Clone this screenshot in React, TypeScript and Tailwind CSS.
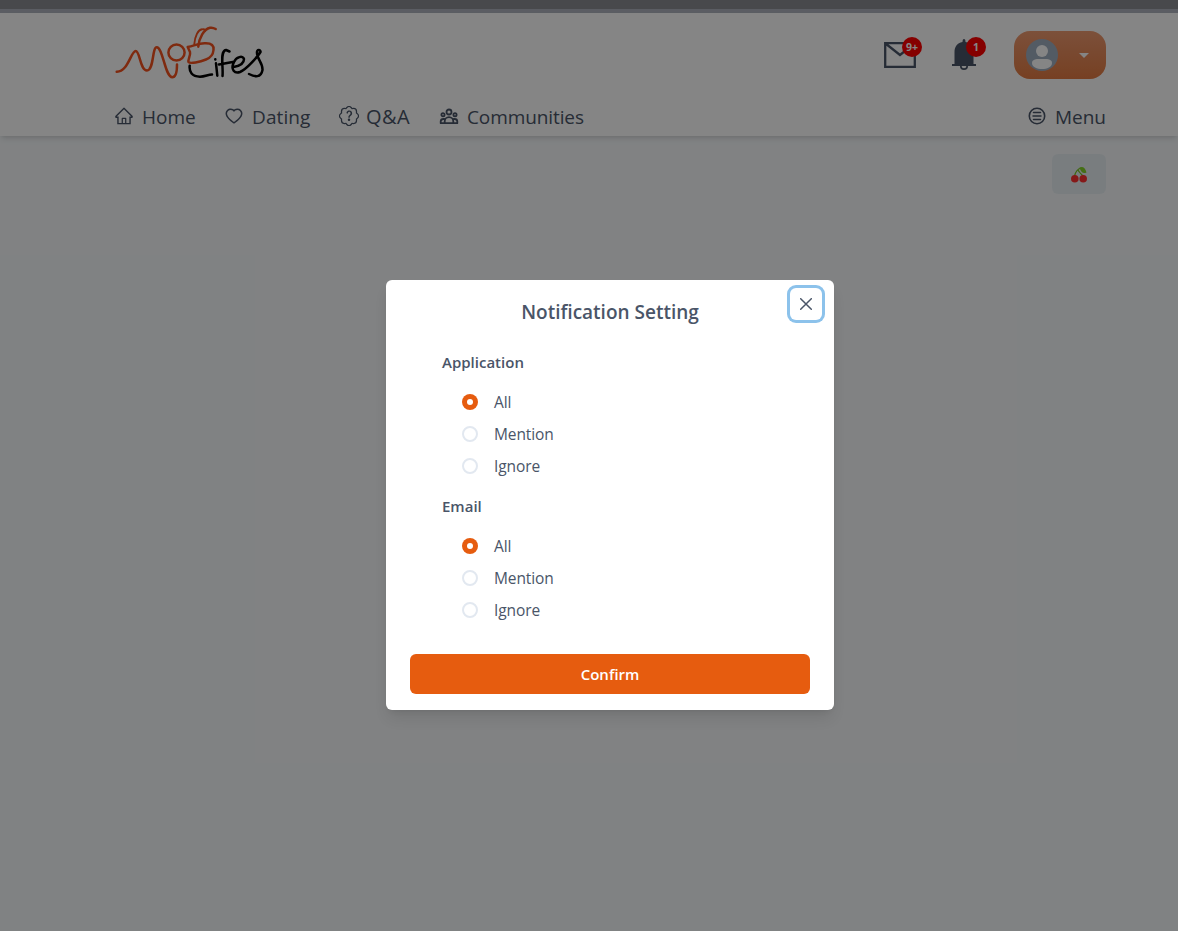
import React from "react";
import { AiOutlineHome, AiOutlineHeart } from "react-icons/ai";
import { BsPatchQuestion } from "react-icons/bs";

const Logo = () => (
  <svg className="block h-[60px] w-[156px]" viewBox="0 0 156 60" fill="none" strokeLinecap="round" strokeLinejoin="round">
    <g stroke="#f4511e" strokeWidth="2.5">
      <path d="M2.700 46.700C14 47 17 26 21.700 26C26 26 26 45.500 33 45.500C40 45.500 38 22.300 42.700 22.300C49 22.300 51 52.300 58.300 52.300C62 52.300 63 45 63 39.500" />
      <circle cx="62.500" cy="27.500" r="8.100" />
      <path d="M73.700 22C80 21 85 18 91 18.300C98 18 100 21 99.500 25C99 31 96 33 92 34.500C86 37 76 39 74.500 37C73.500 35 77 30 76 27L73.700 22Z" />
      <path d="M84.300 21.700C85 13 90 4 96 2.800C98.500 2.300 100 3 101.700 4" />
      <path d="M80.300 19C81 11 84 5 88 4.300Q91 3.500 91 6" strokeWidth="1.900" />
    </g>
    <g stroke="#000" strokeWidth="2.500">
      <path d="M75.700 40.700C75 47 78 51.700 86 51.700C91 51.700 94 49.500 98 49.500M102 38.300L103.300 50.700M101.300 34.300V34.600M108.500 51C109.500 42 105.500 26 112 25L115.500 26.500M105 39.500L120 36.700M119.500 42C126 41 130 38 130 34C129 30 122 32 120 37C116 45 121 49 126 47C133 44 144 31 146.500 27C147 24.500 142.500 24 143 28C143 34 149 38 148.500 45C147 53 141 52 135 49" />
    </g>
  </svg>
);

const MailIcon = () => (
  <svg className="block h-[26px] w-8" viewBox="0 0 32 26" fill="none" stroke="#4a5568" strokeWidth="2.300">
    <path d="M1.200 1.200H30.800V24.800H1.200ZM1.500 1.500L16 13L30.500 1.500" />
  </svg>
);

const BellIcon = () => (
  <svg className="block h-8 w-6" viewBox="0 0 24 32">
    <path d="M12 0Q13.500 0 13.500 3C19 4 21.500 8 21.500 13V25H24V27H0V25H2.500V13C2.500 8 5 4 10.500 3Q10.500 0 12 0Z" fill="#4a5568" />
    <path d="M8.800 27A3.200 3.200 0 0 0 15.200 27" fill="none" stroke="#4a5568" strokeWidth="1.700" />
  </svg>
);

const GroupIcon = () => (
  <svg className="block h-5 w-5" viewBox="0 0 20 20" fill="none" stroke="currentColor" strokeWidth="1.800" strokeLinejoin="round">
    <circle cx="10" cy="5" r="2.500" />
    <circle cx="4" cy="7.700" r="1.600" />
    <circle cx="16" cy="7.700" r="1.600" />
    <path d="M5.700 16.200V14.500A4.300 4.300 0 0 1 14.300 14.500V16.200ZM5.700 16.200H1.700V14.500Q1.700 12 4.500 12H5.800M14.300 16.200H18.300V14.500Q18.300 12 15.500 12H14.200" />
  </svg>
);

const MenuIcon = () => (
  <svg className="block size-[18px] -translate-y-px" viewBox="0 0 18 18" fill="none" stroke="currentColor" strokeWidth="1.600">
    <circle cx="9" cy="9" r="7.700" />
    <path d="M5.500 5.500H12.500M5 9H13M5.500 12.500H12.500" strokeWidth="1.500" strokeLinecap="round" />
  </svg>
);

const Cherries = () => (
  <svg className="block h-4 w-4 translate-y-px" viewBox="0 0 16 16">
    <path d="M3.500 9C4.500 5 6 2 10 1M12 9C10 7 8 5 7 3" fill="none" stroke="#77c51e" strokeWidth="1.200" />
    <path d="M8 1C11-1 14 0 15.500 5.500C12 7 10 5 9 2Z" fill="#83d42a" />
    <circle cx="3.800" cy="11.800" r="3.800" fill="#ff3030" />
    <circle cx="12.200" cy="11.800" r="3.800" fill="#ff3030" />
  </svg>
);

const Option = ({ label, checked = false }: { label: string; checked?: boolean }) => (
  <label className="flex h-8 items-center gap-4 pl-5">
    <span className={checked ? "grid size-4 place-items-center rounded-full bg-[#e65c0f]" : "size-4 rounded-full border-2 border-[#e2e8f0]"}>
      {checked && <span className="size-1.5 rounded-full bg-white" />}
    </span>
    <span className="pt-[2px] text-[15.5px] tracking-[-0.1px]">{label}</span>
  </label>
);

const Group = ({ title }: { title: string }) => (
  <section className="h-36">
    <h3 className="mb-3 h-6 text-[15px] leading-6 font-semibold">{title}</h3>
    <Option label="All" checked />
    <Option label="Mention" />
    <Option label="Ignore" />
  </section>
);

export default function App() {
  return (
    <div className="relative h-[931px] w-[1178px] overflow-hidden bg-[#f7fafc] font-['Open_Sans','Noto_Sans',sans-serif] text-[#4a5568]">
      <div className="h-[13px] border-b-4 border-[#aeb3be] bg-[#8b8d93]" />
      <header className="h-[123px] bg-white pr-[72px] pl-[114px] shadow-md">
        <div className="flex h-[84px] items-center justify-between">
          <Logo />
          <div className="flex items-center">
            <div className="relative mr-9">
              <MailIcon />
              <span className="absolute -top-[5px] left-[18px] grid size-5 place-items-center rounded-full bg-[#f00] pt-px text-[10.5px] font-bold text-white">9+</span>
            </div>
            <div className="relative mr-[38px]">
              <BellIcon />
              <span className="absolute -top-[2px] left-[14px] grid size-5 place-items-center rounded-full bg-[#f00] pt-px text-[10.5px] font-bold text-white">1</span>
            </div>
            <button className="flex h-12 w-[92px] items-center rounded-2xl bg-linear-to-b from-[#ed9a70] to-[#e37b42] pl-3">
              <svg className="size-8" viewBox="0 0 32 32">
                <circle cx="16" cy="16" r="16" fill="#a0aec0" />
                <circle cx="16" cy="12" r="6" fill="#fff" />
                <path d="M6 24C6 21 9 20 12 20H20C23 20 26 21 26 24C26 28 21 30 16 30S6 28 6 24Z" fill="#fff" />
              </svg>
              <svg className="ml-[21px] h-[5px] w-[10px]" viewBox="0 0 10 5"><path d="M0 0H10L5 5Z" fill="#fff" /></svg>
            </button>
          </div>
        </div>
        <nav className="flex h-10 items-center text-[19px]">
          <a className="flex w-[110px] items-center gap-2"><AiOutlineHome className="-translate-y-px" size={20} />Home</a>
          <a className="flex w-[115px] items-center gap-2"><AiOutlineHeart className="-translate-y-px" size={20} /><span className="tracking-[0.1px]">Dating</span></a>
          <a className="flex w-[100px] items-center gap-[7px]"><BsPatchQuestion className="-translate-y-px" size={20} /><span className="text-[20px] tracking-[0.4px]">Q&amp;A</span></a>
          <a className="flex items-center gap-2"><GroupIcon /><span className="tracking-[-0.1px]">Communities</span></a>
          <a className="ml-auto flex items-center gap-[9px]"><MenuIcon />Menu</a>
        </nav>
      </header>
      <div className="flex justify-end pt-[18px] pr-[72px]">
        <button className="grid h-10 w-[54px] place-items-center rounded-md bg-[#e9f0f4]"><Cherries /></button>
      </div>

      <div className="absolute inset-0 bg-black/48 pt-[280px] pl-[386px]">
        <div role="dialog" className="relative h-[430px] w-[448px] rounded-md bg-white px-6 pt-4 shadow-lg">
          <h2 className="h-8 text-center text-[19px] leading-8 font-semibold">Notification Setting</h2>
          <button aria-label="Close" className="absolute top-2 right-3 grid size-8 place-items-center rounded-md shadow-[0_0_0_3px_#8cc2eb]">
            <svg className="size-3" viewBox="0 0 12 12" stroke="#4a5568" strokeWidth="1.500" strokeLinecap="round"><path d="M.7.7L11.300 11.300M11.300.7L.7 11.300" /></svg>
          </button>
          <div className="h-[326px] px-8 pt-[22px]">
            <Group title="Application" />
            <Group title="Email" />
          </div>
          <button className="h-10 w-full rounded-md bg-[#e65c0f] text-[15px] font-semibold text-white">Confirm</button>
        </div>
      </div>
    </div>
  );
}
